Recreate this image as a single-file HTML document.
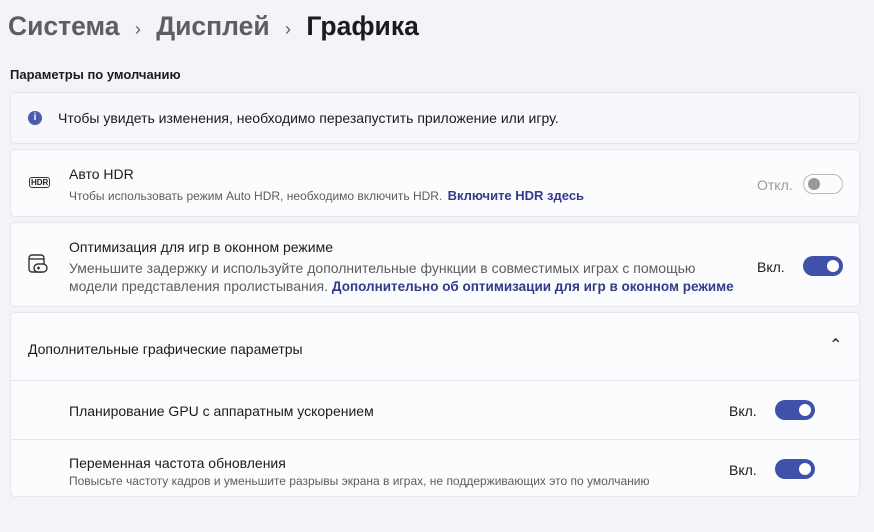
<html><head><style>
body{margin:0;width:874px;height:532px;background:#f3f4f8;font-family:"Liberation Sans",sans-serif;color:#1b1b1b;position:relative;overflow:hidden}
.a{position:absolute}
.card{position:absolute;left:10px;width:850px;background:#fbfcfe;border:1px solid #e5e6ea;border-radius:5px;box-sizing:border-box}
.t{font-size:14px}
.s{font-size:12px;color:#5d5d5d}
.lk{color:#333a8a;font-weight:bold}
.tg{position:absolute;width:40px;height:20px;border-radius:10px;background:#3f51a8}
.tg::after{content:"";position:absolute;right:4px;top:4px;width:12px;height:12px;border-radius:6px;background:#fff}
.off{background:transparent;border:1px solid #bbb;box-sizing:border-box}
.off::after{left:4px;right:auto;top:3px;background:#999}
</style></head><body>
<div class="a" style="left:8px;top:11px;font-size:26.5px;font-weight:bold;color:#5e5e5e">Система <span style="font-size:18px;margin:0 8px;font-weight:normal">›</span> Дисплей <span style="font-size:18px;margin:0 8px;font-weight:normal">›</span> <span style="color:#1b1b1b">Графика</span></div>
<div class="a" style="left:10px;top:67px;font-size:13px;font-weight:bold">Параметры по умолчанию</div>
<div class="card" style="top:92px;height:52px;background:#f7f8fb">
<div class="a" style="left:17px;top:18px;width:14px;height:14px;border-radius:7px;background:#4a5bb0;color:#fff;font-size:10px;text-align:center;line-height:14px;font-weight:bold">i</div>
<div class="a t" style="left:47px;top:17px">Чтобы увидеть изменения, необходимо перезапустить приложение или игру.</div></div>
<div class="card" style="top:149px;height:68px">
<div class="a" style="left:18px;top:27px;font-size:8px;border:1.5px solid #333;border-radius:3px;padding:0 1px;font-weight:bold">HDR</div>
<div class="a t" style="left:58px;top:16px">Авто HDR</div>
<div class="a s" style="left:58px;top:38px">Чтобы использовать режим Auto HDR, необходимо включить HDR. <span class="lk" style="font-size:13px;margin-left:2px">Включите HDR здесь</span></div>
<div class="a t" style="left:746px;top:27px;color:#9a9a9a">Откл.</div>
<div class="tg off" style="left:792px;top:24px"></div></div>
<div class="card" style="top:222px;height:85px">
<svg class="a" style="left:17px;top:31px" width="20" height="20" viewBox="0 0 20 20" fill="none" stroke="#333" stroke-width="1.4"><rect x="1" y="1" width="15" height="17" rx="3"/><line x1="1" y1="5" x2="16" y2="5"/><rect x="6" y="10" width="13" height="8" rx="4" fill="#fbfcfe"/><line x1="9" y1="14" x2="12" y2="14"/><line x1="10.5" y1="12.5" x2="10.5" y2="15.5"/></svg>
<div class="a t" style="left:58px;top:16px">Оптимизация для игр в оконном режиме</div>
<div class="a" style="left:58px;top:36px;font-size:14px;color:#5d5d5d;line-height:18px">Уменьшите задержку и используйте дополнительные функции в совместимых играх с помощью<br>модели представления пролистывания. <span class="lk" style="font-size:13.5px">Дополнительно об оптимизации для игр в оконном режиме</span></div>
<div class="a t" style="left:746px;top:36px">Вкл.</div>
<div class="tg" style="left:792px;top:33px"></div></div>
<div class="card" style="top:312px;height:185px">
<div class="a t" style="left:17px;top:28px">Дополнительные графические параметры</div>
<div class="a" style="left:818px;top:22px;font-size:16px">&#8963;</div>
<div class="a" style="left:0;right:0;top:67px;border-top:1px solid #e5e6ea"></div>
<div class="a t" style="left:58px;top:90px">Планирование GPU с аппаратным ускорением</div>
<div class="a t" style="left:718px;top:90px">Вкл.</div>
<div class="tg" style="left:764px;top:87px"></div>
<div class="a" style="left:0;right:0;top:126px;border-top:1px solid #e5e6ea"></div>
<div class="a t" style="left:58px;top:142px">Переменная частота обновления</div>
<div class="a" style="left:58px;top:161px;font-size:12px;color:#5d5d5d">Повысьте частоту кадров и уменьшите разрывы экрана в играх, не поддерживающих это по умолчанию</div>
<div class="a t" style="left:718px;top:149px">Вкл.</div>
<div class="tg" style="left:764px;top:146px"></div></div>
</body></html>
